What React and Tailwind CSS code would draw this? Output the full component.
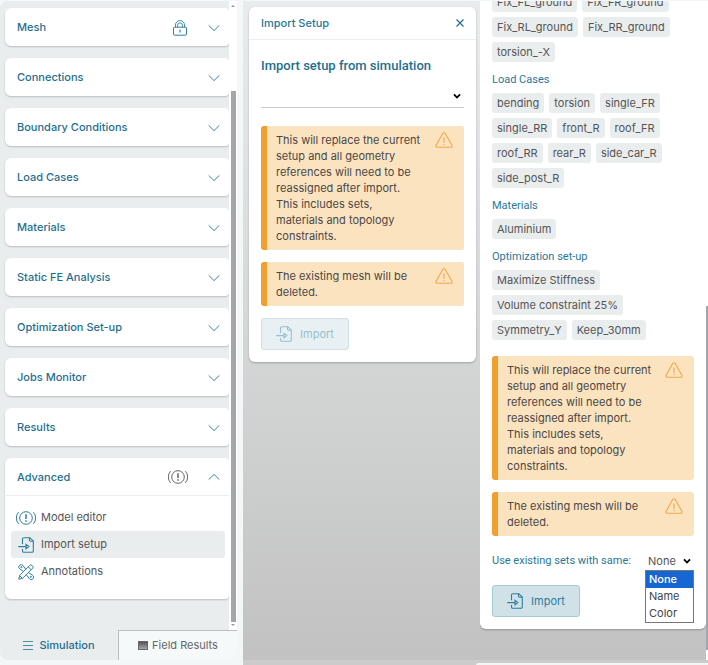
const sections = [
  { title: "Mesh", locked: true },
  { title: "Connections" },
  { title: "Boundary Conditions" },
  { title: "Load Cases" },
  { title: "Materials" },
  { title: "Static FE Analysis" },
  { title: "Optimization Set-up" },
  { title: "Jobs Monitor" },
  { title: "Results" },
];

const tools = [
  { label: "Model editor", icon: AlertIcon },
  { label: "Import setup", icon: ImportIcon, active: true },
  { label: "Annotations", icon: AnnotateIcon },
];

const fixtureTags = [
  "Fix_FL_ground",
  "Fix_FR_ground",
  "Fix_RL_ground",
  "Fix_RR_ground",
  "torsion_-X",
];

const loadCaseTags = [
  "bending",
  "torsion",
  "single_FR",
  "single_RR",
  "front_R",
  "roof_FR",
  "roof_RR",
  "rear_R",
  "side_car_R",
  "side_post_R",
];

const setupTags = [
  "Maximize Stiffness",
  "Volume constraint 25%",
  "Symmetry_Y",
  "Keep_30mm",
];

function ChevronIcon({ up }) {
  return (
    <svg className="h-3 w-3 text-[#3a84a0]" fill="none" stroke="currentColor" viewBox="0 0 12 12">
      <path d={up ? "M.7 8.6 6 3.4 11.3 8.6" : "M.7 3.4 6 8.6 11.3 3.4"} />
    </svg>
  );
}

function LockIcon() {
  return (
    <svg className="h-4 w-4 text-[#2f7e9c]" fill="none" stroke="currentColor" viewBox="0 0 16 16">
      <rect height="8" rx="1" width="13" x="1.5" y="7.2" />
      <path d="M3.5 7V5a4.5 4.5 0 0 1 9 0v2M5.6 7V5.2a2.4 2.4 0 0 1 4.8 0V7" strokeWidth="0.9" />
      <path d="M8 9.8v2.6" strokeWidth="1.2" />
    </svg>
  );
}

function AlertIcon({ className = "text-[#2f7e9c]" }) {
  return (
    <svg className={`h-4 w-5 ${className}`} fill="none" stroke="currentColor" viewBox="0 0 20 16">
      <circle cx="10" cy="8" r="6.3" />
      <path d="M2.6 2.2a8.5 8.5 0 0 0 0 11.6M17.4 2.2a8.5 8.5 0 0 1 0 11.6" />
      <path d="M10 4.2v4.8M10 10.3v1.5" strokeWidth="1.5" />
    </svg>
  );
}

function ImportIcon({ className = "text-[#2f7e9c]" }) {
  return (
    <svg className={`h-4 w-4 ${className}`} fill="none" stroke="currentColor" strokeWidth="1.1" viewBox="0 0 16 16">
      <path d="M4.5 7.2V2a1.3 1.3 0 0 1 1.3-1.3h6L15.3 4v10a1.3 1.3 0 0 1-1.3 1.3H5.8A1.3 1.3 0 0 1 4.5 14v-2" />
      <path d="M11.5.8V3a1.2 1.2 0 0 0 1.2 1.2h2.5" />
      <path d="M.3 9.6h7.7M8 7.4v4.4l2.9-2.2z" />
    </svg>
  );
}

function AnnotateIcon() {
  return (
    <svg className="h-4 w-4 text-[#2f7e9c]" fill="none" stroke="currentColor" viewBox="0 0 16 16">
      <path d="M.8 15.2l.8-3.7L11.8 1.3a1.5 1.5 0 0 1 2.1 0l.8.8a1.5 1.5 0 0 1 0 2.1L4.5 14.4zM10.3 2.8l2.9 2.9M1.6 11.5l2.9 2.9" />
      <path d="M5.6 7.5 1.7 4.9a2.4 2.4 0 1 1 3.5-3.2L7.7 5.4M10.4 8.5l4 2.6a2.4 2.4 0 1 1-3.3 3.3L8.3 10.6" />
      <circle cx="3.4" cy="3.2" r=".6" />
      <circle cx="12.8" cy="12.8" r=".6" />
    </svg>
  );
}

function WarningIcon() {
  return (
    <svg className="h-4 w-[18px] shrink-0 text-[#f0a94a]" fill="none" stroke="currentColor" strokeWidth="1.1" viewBox="0 0 18 16">
      <path d="M7.9 1.3a1.3 1.3 0 0 1 2.2 0l6.9 12.2a1.2 1.2 0 0 1-1.1 1.8H2.1A1.2 1.2 0 0 1 1 13.5z" strokeLinejoin="round" />
      <path d="M9 5.5v5.5M9 12v1.3" />
    </svg>
  );
}

function SelectArrow() {
  return (
    <svg className="pointer-events-none h-2 w-2 text-black" fill="none" stroke="currentColor" strokeWidth="1.8" viewBox="0 0 8 8">
      <path d="M1 2.3 4 5.5 7 2.3" />
    </svg>
  );
}

function Section({ title, locked }) {
  return (
    <button
      className="flex h-[38px] w-full shrink-0 items-center rounded-l-md rounded-r-sm bg-white pt-px pr-[9px] pl-3 text-left text-[11px] font-medium text-[#1f6f8f] shadow-[0_1px_2px_rgba(0,0,0,0.2)]"
      type="button"
    >
      <span className="grow">{title}</span>
      {locked ? (
        <span className="mr-5">
          <LockIcon />
        </span>
      ) : null}
      <ChevronIcon />
    </button>
  );
}

function Notice({ children }) {
  return (
    <div className="flex items-start justify-between rounded-[3px] border-l-[6px] border-[#f0a02c] bg-[#fce3c0] py-[6px] pr-[11px] pl-[9px] text-[11px] leading-4 text-[#4a4744]">
      <p className="w-[150px]">{children}</p>
      <WarningIcon />
    </div>
  );
}

function Notices() {
  return (
    <div className="flex flex-col gap-3">
      <Notice>
        This will replace the current
        <br />
        setup and all geometry
        <br />
        references will need to be
        <br />
        reassigned after import.
        <br />
        This includes sets,
        <br />
        materials and topology
        <br />
        constraints.
      </Notice>
      <Notice>
        The existing mesh will be
        <br />
        deleted.
      </Notice>
    </div>
  );
}

function ImportButton({ disabled }) {
  return (
    <button
      className="mt-3 flex h-8 w-[88px] items-center justify-center gap-2 rounded-[3px] border border-[#a5cad5] bg-[#d0e1e7] text-[11px] text-[#2f7e9c] disabled:border-[#cfe1e7] disabled:bg-[#e8f0f3] disabled:text-[#98bfce]"
      disabled={disabled}
      type="button"
    >
      <ImportIcon className="text-current" />
      Import
    </button>
  );
}

function TagGroup({ title, tags }) {
  return (
    <section>
      {title ? (
        <h3 className="mb-[5px] font-[Roboto,sans-serif] text-[11px] leading-4 text-[#2a7896]">{title}</h3>
      ) : null}
      <ul className="flex flex-wrap gap-[5px]">
        {tags.map((tag) => (
          <li className="h-5 rounded-[3px] bg-[#e9edee] px-[5px] text-[11px] leading-5 whitespace-nowrap text-[#555]" key={tag}>
            {tag}
          </li>
        ))}
      </ul>
    </section>
  );
}

function Sidebar() {
  return (
    <aside className="mb-[5px] flex w-[237px] shrink-0 flex-col rounded-lg bg-[#e9edee]">
      <div className="flex grow">
        <div className="flex grow flex-col gap-3 pt-[7px] pb-[30px] pl-[5px]">
          {sections.map((section) => (
            <Section key={section.title} locked={section.locked} title={section.title} />
          ))}
          <div className="rounded-l-md rounded-r-sm bg-white pb-[14px] shadow-[0_1px_2px_rgba(0,0,0,0.2)]">
            <button
              className="flex h-[38px] w-full items-center border-b border-[#eceff0] pt-px pr-[9px] pl-3 text-left text-[11px] font-medium text-[#1f6f8f]"
              type="button"
            >
              <span className="grow">Advanced</span>
              <span className="mr-5">
                <AlertIcon className="text-[#666]" />
              </span>
              <ChevronIcon up />
            </button>
            <ul className="px-[6px] pt-2 pr-1">
              {tools.map(({ label, icon: Icon, active }) => (
                <li key={label}>
                  <button
                    className={
                      active
                        ? "flex h-[27px] w-full items-center rounded-[3px] bg-[#e9edee] pl-[5px] text-[11px] text-[#555]"
                        : "flex h-[27px] w-full items-center pl-[5px] text-[11px] text-[#555]"
                    }
                    type="button"
                  >
                    <span className="mr-[5px] flex w-5 justify-center">
                      <Icon />
                    </span>
                    {label}
                  </button>
                </li>
              ))}
            </ul>
          </div>
        </div>
        <div className="flex w-2 shrink-0 flex-col items-center bg-white py-1">
          <span className="h-0 w-0 border-x-2 border-b-2 border-x-transparent border-b-[#999]" />
          <span className="mt-[84px] w-[5px] grow bg-[#a3a7a9]" />
          <span className="mt-[2px] h-0 w-0 border-x-2 border-t-2 border-x-transparent border-t-[#999]" />
        </div>
      </div>
      <nav className="flex h-[30px] shrink-0 text-[11px]">
        <button className="flex w-[118px] items-center justify-center gap-[6px] font-medium text-[#1f6f8f]" type="button">
          <svg className="h-[9px] w-[10px] text-[#4a8fa9]" stroke="currentColor" viewBox="0 0 10 9">
            <path d="M0 .5h10M0 4.5h10M0 8.5h10" />
          </svg>
          Simulation
        </button>
        <button
          className="flex grow items-center justify-center gap-1 rounded-br-lg border-t border-l border-[#bcc0c2] bg-[#f5f9fa] text-[#666]"
          type="button"
        >
          <span className="h-[9px] w-[10px] border border-[#666] bg-linear-to-b from-[#555] to-[#aaa]" />
          Field Results
        </button>
      </nav>
    </aside>
  );
}

function ImportPanel() {
  return (
    <section className="rounded-md bg-white shadow-[0_1px_2px_rgba(0,0,0,0.25)]">
      <header className="flex h-[33px] items-center justify-between border-b border-[#eceff0] px-3">
        <h2 className="text-[11px] font-medium text-[#2a7896]">Import Setup</h2>
        <button aria-label="Close" className="text-[#1f6f8f]" type="button">
          <svg className="h-2 w-2" fill="none" stroke="currentColor" strokeWidth="1.2" viewBox="0 0 8 8">
            <path d="M.5.5l7 7M7.5.5l-7 7" />
          </svg>
        </button>
      </header>
      <div className="px-3 pt-4 pb-3">
        <label className="block font-[Roboto,sans-serif] text-[13px] leading-5 font-medium text-[#1f6f8f]" htmlFor="source">
          Import setup from simulation
        </label>
        <div className="mt-[9px] mb-[18px] flex items-center border-b border-[#ccc] pr-[3px]">
          <select className="h-[22px] min-w-0 grow appearance-none outline-none" id="source" />
          <SelectArrow />
        </div>
        <Notices />
        <ImportButton disabled />
      </div>
    </section>
  );
}

function SetupPanel() {
  return (
    <section className="rounded-b-md bg-white px-3 pb-3 shadow-[0_1px_2px_rgba(0,0,0,0.25)]">
      <div className="-mt-[9px] flex flex-col gap-[10px]">
        <TagGroup tags={fixtureTags} />
        <TagGroup tags={loadCaseTags} title="Load Cases" />
        <TagGroup tags={["Aluminium"]} title="Materials" />
        <TagGroup tags={setupTags} title="Optimization set-up" />
      </div>
      <div className="mt-4">
        <Notices />
      </div>
      <div className="mt-[13px] flex h-6 items-center text-[11px]">
        <label className="grow font-[Roboto,sans-serif] whitespace-nowrap text-[#2a7896]" htmlFor="match">
          Use existing sets with same:
        </label>
        <div className="relative flex w-[49px] items-center px-[3px]">
          <select className="min-w-0 grow appearance-none text-[#555] outline-none" defaultValue="None" id="match">
            <option>None</option>
            <option>Name</option>
            <option>Color</option>
          </select>
          <SelectArrow />
          <ul className="absolute top-[17px] left-0 z-10 w-[49px] border border-[#777] bg-white leading-[17px] text-[#444]">
            <li className="bg-[#1767d2] pl-[3px] font-medium text-white">None</li>
            <li className="pl-[3px]">Name</li>
            <li className="pl-[3px]">Color</li>
          </ul>
        </div>
      </div>
      <ImportButton />
    </section>
  );
}

export default function App() {
  return (
    <div className="h-screen overflow-hidden bg-[#f3f7f8] pt-px font-[Inter,sans-serif]">
      <div className="flex h-full gap-[6px]">
        <Sidebar />
        <div className="flex min-w-0 grow flex-col bg-[#cbcbcb]">
          <main className="flex min-h-0 grow bg-linear-to-b from-[#e9eced] to-[#c2c2c2]">
            <div className="w-[237px] shrink-0 pt-[6px] pr-[4px] pl-[6px]">
              <ImportPanel />
            </div>
            <div className="min-w-0 grow overflow-hidden">
              <SetupPanel />
            </div>
            <div className="flex w-[2px] shrink-0 flex-col items-end bg-white">
              <span className="mt-[305px] mb-[10px] w-[2px] grow bg-[#a3a7a9]" />
            </div>
          </main>
          <div className="mt-[3px] ml-[233px] h-[2px] shrink-0 rounded-tl-md bg-[#f3f5f5]" />
        </div>
      </div>
    </div>
  );
}
